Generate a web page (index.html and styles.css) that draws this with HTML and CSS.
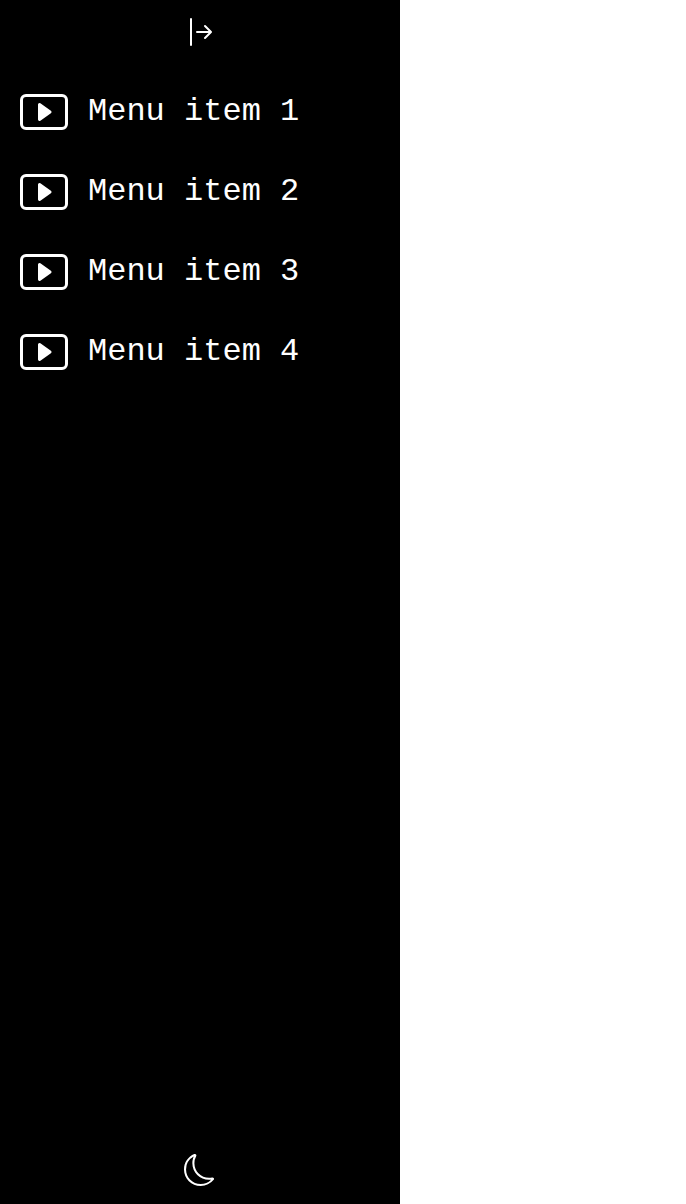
FILE: index.html
```html
<!DOCTYPE html>
<html lang="en">
<head>
<meta charset="utf-8">
<title>Menu</title>
<link rel="stylesheet" href="styles.css">
</head>
<body>
<svg class="symbols" aria-hidden="true">
  <symbol id="play-btn" viewBox="0 0 16 16">
    <path d="M6.79 5.093A.5.5 0 0 0 6 5.5v5a.5.5 0 0 0 .79.407l3.5-2.5a.5.5 0 0 0 0-.814l-3.5-2.5z"/>
    <path d="M0 4a2 2 0 0 1 2-2h12a2 2 0 0 1 2 2v8a2 2 0 0 1-2 2H2a2 2 0 0 1-2-2V4zm15 0a1 1 0 0 0-1-1H2a1 1 0 0 0-1 1v8a1 1 0 0 0 1 1h12a1 1 0 0 0 1-1V4z"/>
  </symbol>
</svg>
<nav class="sidebar">
  <button class="toggle" aria-label="Expand">
    <svg class="icon" viewBox="0 0 16 16"><path d="M6 8a.5.5 0 0 0 .5.5h5.793l-2.147 2.146a.5.5 0 0 0 .708.708l3-3a.5.5 0 0 0 0-.708l-3-3a.5.5 0 0 0-.708.708L12.293 7.5H6.5A.5.5 0 0 0 6 8zm-2.5 7a.5.5 0 0 1-.5-.5v-13a.5.5 0 0 1 1 0v13a.5.5 0 0 1-.5.5z"/></svg>
  </button>
  <ul class="menu">
    <li class="item"><svg class="item-icon"><use href="#play-btn"/></svg><span>Menu item 1</span></li>
    <li class="item"><svg class="item-icon"><use href="#play-btn"/></svg><span>Menu item 2</span></li>
    <li class="item"><svg class="item-icon"><use href="#play-btn"/></svg><span>Menu item 3</span></li>
    <li class="item"><svg class="item-icon"><use href="#play-btn"/></svg><span>Menu item 4</span></li>
  </ul>
  <button class="theme" aria-label="Dark mode">
    <svg class="icon" viewBox="0 0 16 16"><path d="M6 .278a.768.768 0 0 1 .08.858 7.208 7.208 0 0 0-.878 3.46c0 4.021 3.278 7.277 7.318 7.277.527 0 1.04-.055 1.533-.16a.787.787 0 0 1 .81.316.733.733 0 0 1-.031.893A8.349 8.349 0 0 1 8.344 16C3.734 16 0 12.286 0 7.71 0 4.266 2.114 1.312 5.124.06A.752.752 0 0 1 6 .278zM4.858 1.311A7.269 7.269 0 0 0 1.025 7.71c0 4.02 3.279 7.276 7.319 7.276a7.316 7.316 0 0 0 5.205-2.162c-.337.042-.68.063-1.029.063-4.61 0-8.343-3.714-8.343-8.29 0-1.167.242-2.278.681-3.286z"/></svg>
  </button>
</nav>
</body>
</html>
```
FILE: styles.css
```css
body {
  margin: 0;
  background: #fff;
}

.symbols {
  display: none;
}

.sidebar {
  display: flex;
  flex-direction: column;
  width: 400px;
  height: 100vh;
  background: #000;
  color: #fff;
  font: 32px/36px "Liberation Mono", monospace;
}

.toggle,
.theme {
  display: flex;
  justify-content: center;
  padding: 16px 0;
  border: 0;
  background: none;
  color: inherit;
}

.theme {
  padding: 18px 0;
}

.icon {
  width: 32px;
  height: 32px;
  fill: currentColor;
}

.menu {
  flex: 1;
  margin: 0;
  padding: 8px 0 0;
  list-style: none;
}

.item {
  display: flex;
  align-items: center;
  gap: 20px;
  height: 80px;
  padding: 0 20px;
}

.item-icon {
  width: 48px;
  height: 48px;
  fill: currentColor;
}
```
